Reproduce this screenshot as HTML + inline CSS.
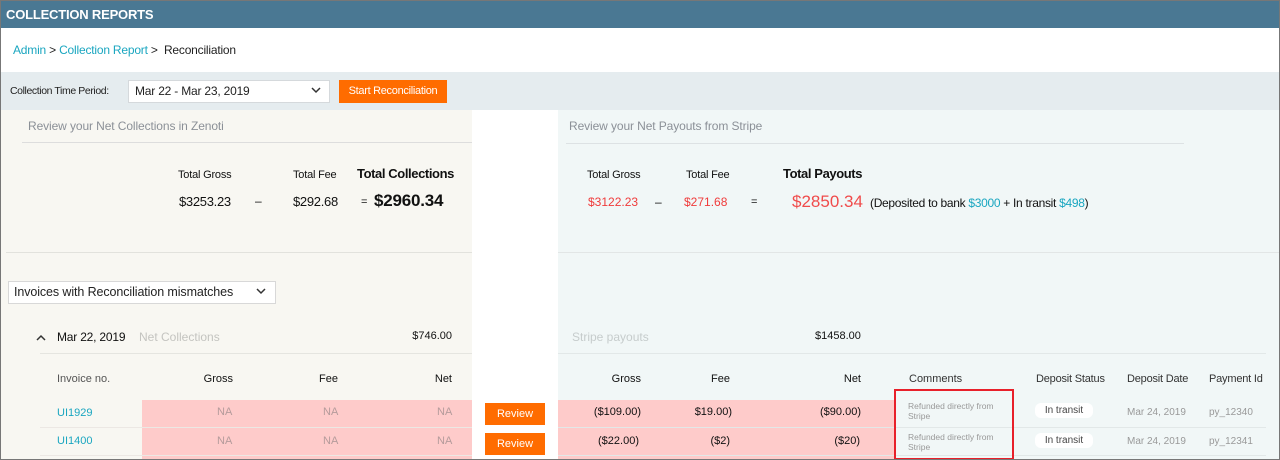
<!DOCTYPE html>
<html><head><meta charset="utf-8"><style>
*{margin:0;padding:0;box-sizing:border-box}
body{width:1280px;height:460px;overflow:hidden;font-family:"Liberation Sans",sans-serif;background:#fff;position:relative;color:#111}
.a{position:absolute;white-space:nowrap}
.r{text-align:right}
</style></head><body>
<div class="a" style="left:0;top:0;width:1280px;height:460px;border:1px solid #777;z-index:10;pointer-events:none"></div>
<div class="a" style="left:0;top:0;width:1280px;height:28px;background:#4a7893"></div>
<div class="a" style="left:6px;top:7px;color:#fff;font-size:13px;font-weight:bold;letter-spacing:-0.2px">COLLECTION REPORTS</div>
<div class="a" style="left:13px;top:43px;font-size:12px;color:#222;letter-spacing:-0.2px"><span style="color:#1aa6c0">Admin</span> &gt; <span style="color:#1aa6c0">Collection Report</span> &gt;&nbsp; Reconciliation</div>
<div class="a" style="left:0;top:72px;width:1280px;height:38px;background:#e5ecef"></div>
<div class="a" style="left:10px;top:85px;font-size:10.5px;color:#222;letter-spacing:-0.4px">Collection Time Period:</div>
<div class="a" style="left:128px;top:80px;width:202px;height:23px;background:#fff;border:1px solid #d5d9dc"></div>
<div class="a" style="left:135px;top:84px;font-size:12px;color:#222;letter-spacing:-0.2px">Mar 22 - Mar 23, 2019</div>
<svg class="a" style="left:311px;top:87px" width="10" height="7"><path d="M1 1l4 4 4-4" stroke="#333" stroke-width="1.5" fill="none"/></svg>
<div class="a" style="left:339px;top:80px;width:108px;height:23px;background:#ff6c00;color:#fff;font-size:11px;text-align:center;line-height:23px;letter-spacing:-0.3px">Start Reconciliation</div>
<div class="a" style="left:0;top:110px;width:472px;height:350px;background:#f8f7f2"></div>
<div class="a" style="left:558px;top:110px;width:722px;height:350px;background:#f1f7f7"></div>
<div class="a" style="left:28px;top:119px;font-size:12px;color:#8b9097;letter-spacing:-0.1px">Review your Net Collections in Zenoti</div>
<div class="a" style="left:22px;top:142px;width:450px;height:1px;background:#ddd"></div>
<div class="a" style="left:569px;top:119px;font-size:12px;color:#8b9097;letter-spacing:-0.1px">Review your Net Payouts from Stripe</div>
<div class="a" style="left:566px;top:143px;width:618px;height:1px;background:#dde2e4"></div>
<div class="a" style="left:178px;top:169px;font-size:11px;letter-spacing:-0.2px">Total Gross</div>
<div class="a" style="left:293px;top:169px;font-size:11px;letter-spacing:-0.2px">Total Fee</div>
<div class="a" style="left:357px;top:166px;font-size:13px;font-weight:bold;letter-spacing:-0.4px">Total Collections</div>
<div class="a" style="left:179px;top:194px;font-size:13px;letter-spacing:-0.3px">$3253.23</div>
<div class="a" style="left:255px;top:194px;font-size:12px">–</div>
<div class="a" style="left:293px;top:194px;font-size:13px;letter-spacing:-0.3px">$292.68</div>
<div class="a" style="left:361px;top:196px;font-size:11px">=</div>
<div class="a" style="left:374px;top:191px;font-size:17px;font-weight:bold;letter-spacing:-0.2px">$2960.34</div>
<div class="a" style="left:587px;top:169px;font-size:11px;letter-spacing:-0.2px">Total Gross</div>
<div class="a" style="left:686px;top:169px;font-size:11px;letter-spacing:-0.2px">Total Fee</div>
<div class="a" style="left:783px;top:166px;font-size:13px;font-weight:bold;letter-spacing:-0.4px">Total Payouts</div>
<div class="a" style="left:588px;top:195px;font-size:12px;color:#f03b3b">$3122.23</div>
<div class="a" style="left:655px;top:195px;font-size:12px">–</div>
<div class="a" style="left:684px;top:195px;font-size:12px;color:#f03b3b">$271.68</div>
<div class="a" style="left:751px;top:196px;font-size:11px">=</div>
<div class="a" style="left:792px;top:192px;font-size:17px;color:#f04b4b">$2850.34</div>
<div class="a" style="left:870px;top:196px;font-size:12px;letter-spacing:-0.3px">(Deposited to bank <span style="color:#1aa6c0">$3000</span> + In transit <span style="color:#1aa6c0">$498</span>)</div>
<div class="a" style="left:6px;top:252px;width:466px;height:1px;background:#e2e2dd"></div>
<div class="a" style="left:558px;top:252px;width:722px;height:1px;background:#e2e6e6"></div>
<div class="a" style="left:8px;top:281px;width:268px;height:23px;background:#fff;border:1px solid #d8d8d8"></div>
<div class="a" style="left:14px;top:285px;font-size:12.5px;color:#222;letter-spacing:-0.1px">Invoices with Reconciliation mismatches</div>
<svg class="a" style="left:256px;top:288px" width="10" height="7"><path d="M1 1l4 4 4-4" stroke="#333" stroke-width="1.5" fill="none"/></svg>
<svg class="a" style="left:36px;top:334px" width="10" height="7"><path d="M1 6l4-4 4 4" stroke="#333" stroke-width="1.5" fill="none"/></svg>
<div class="a" style="left:57px;top:330px;font-size:12px;letter-spacing:-0.2px">Mar 22, 2019</div>
<div class="a" style="left:139px;top:330px;font-size:12px;color:#c4c4c0">Net Collections</div>
<div class="a r" style="left:380px;width:72px;top:330px;font-size:11px">$746.00</div>
<div class="a" style="left:572px;top:330px;font-size:12px;color:#c6cccc">Stripe payouts</div>
<div class="a" style="left:815px;top:330px;font-size:11px">$1458.00</div>
<div class="a" style="left:40px;top:353px;width:432px;height:1px;background:#e5e5e0"></div>
<div class="a" style="left:558px;top:353px;width:708px;height:1px;background:#e2e8e8"></div>
<div class="a" style="left:57px;top:373px;font-size:11px;color:#555">Invoice no.</div>
<div class="a r" style="left:150px;width:83px;top:373px;font-size:11px">Gross</div>
<div class="a r" style="left:250px;width:88px;top:373px;font-size:11px">Fee</div>
<div class="a r" style="left:400px;width:52px;top:373px;font-size:11px">Net</div>
<div class="a r" style="left:560px;width:81px;top:373px;font-size:11px">Gross</div>
<div class="a r" style="left:680px;width:50px;top:373px;font-size:11px">Fee</div>
<div class="a r" style="left:800px;width:61px;top:373px;font-size:11px">Net</div>
<div class="a" style="left:909px;top:373px;font-size:11px;color:#333">Comments</div>
<div class="a" style="left:1036px;top:373px;font-size:11px;color:#333;letter-spacing:-0.2px">Deposit Status</div>
<div class="a" style="left:1127px;top:373px;font-size:11px;color:#333;letter-spacing:-0.2px">Deposit Date</div>
<div class="a" style="left:1209px;top:373px;font-size:11px;color:#333;letter-spacing:-0.2px">Payment Id</div>
<div class="a" style="left:142px;top:400px;width:330px;height:60px;background:#fecbca"></div>
<div class="a" style="left:558px;top:400px;width:336px;height:60px;background:#fecbca"></div>
<div class="a" style="left:40px;top:427px;width:432px;height:1px;background:#ece8e4"></div>
<div class="a" style="left:558px;top:427px;width:708px;height:1px;background:#e2e8e8"></div>
<div class="a" style="left:40px;top:455px;width:432px;height:1px;background:#ece8e4"></div>
<div class="a" style="left:558px;top:455px;width:708px;height:1px;background:#e2e8e8"></div>
<div class="a" style="left:57px;top:407px;font-size:11px;color:#1aa6c0">UI1929</div>
<div class="a" style="left:57px;top:435px;font-size:11px;color:#1aa6c0">UI1400</div>
<div class="a" style="left:217px;top:406px;font-size:11px;color:#b59b9b">NA</div>
<div class="a" style="left:323px;top:406px;font-size:11px;color:#b59b9b">NA</div>
<div class="a" style="left:437px;top:406px;font-size:11px;color:#b59b9b">NA</div>
<div class="a" style="left:217px;top:435px;font-size:11px;color:#b59b9b">NA</div>
<div class="a" style="left:323px;top:435px;font-size:11px;color:#b59b9b">NA</div>
<div class="a" style="left:437px;top:435px;font-size:11px;color:#b59b9b">NA</div>
<div class="a" style="left:485px;top:403px;width:60px;height:22px;background:#ff6c00;color:#fff;font-size:11px;text-align:center;line-height:22px">Review</div>
<div class="a" style="left:485px;top:433px;width:60px;height:22px;background:#ff6c00;color:#fff;font-size:11px;text-align:center;line-height:22px">Review</div>
<div class="a r" style="left:560px;width:81px;top:406px;font-size:11px">($109.00)</div>
<div class="a r" style="left:660px;width:72px;top:406px;font-size:11px">$19.00)</div>
<div class="a r" style="left:780px;width:81px;top:406px;font-size:11px">($90.00)</div>
<div class="a r" style="left:560px;width:79px;top:435px;font-size:11px">($22.00)</div>
<div class="a r" style="left:660px;width:70px;top:435px;font-size:11px">($2)</div>
<div class="a r" style="left:780px;width:80px;top:435px;font-size:11px">($20)</div>
<div class="a" style="left:908px;top:401px;font-size:8.5px;color:#999;line-height:10px">Refunded directly from<br>Stripe</div>
<div class="a" style="left:908px;top:432px;font-size:8.5px;color:#999;line-height:10px">Refunded directly from<br>Stripe</div>
<div class="a" style="left:894px;top:389px;width:120px;height:71px;border:2px solid #e8202a"></div>
<div class="a" style="left:1035px;top:403px;width:58px;height:15px;background:#fff;border-radius:6px;font-size:10px;text-align:center;line-height:15px;color:#444">In transit</div>
<div class="a" style="left:1035px;top:433px;width:58px;height:15px;background:#fff;border-radius:6px;font-size:10px;text-align:center;line-height:15px;color:#444">In transit</div>
<div class="a" style="left:1127px;top:407px;font-size:10px;color:#999">Mar 24, 2019</div>
<div class="a" style="left:1127px;top:436px;font-size:10px;color:#999">Mar 24, 2019</div>
<div class="a" style="left:1209px;top:407px;font-size:10px;color:#999">py_12340</div>
<div class="a" style="left:1209px;top:436px;font-size:10px;color:#999">py_12341</div>
</body></html>
